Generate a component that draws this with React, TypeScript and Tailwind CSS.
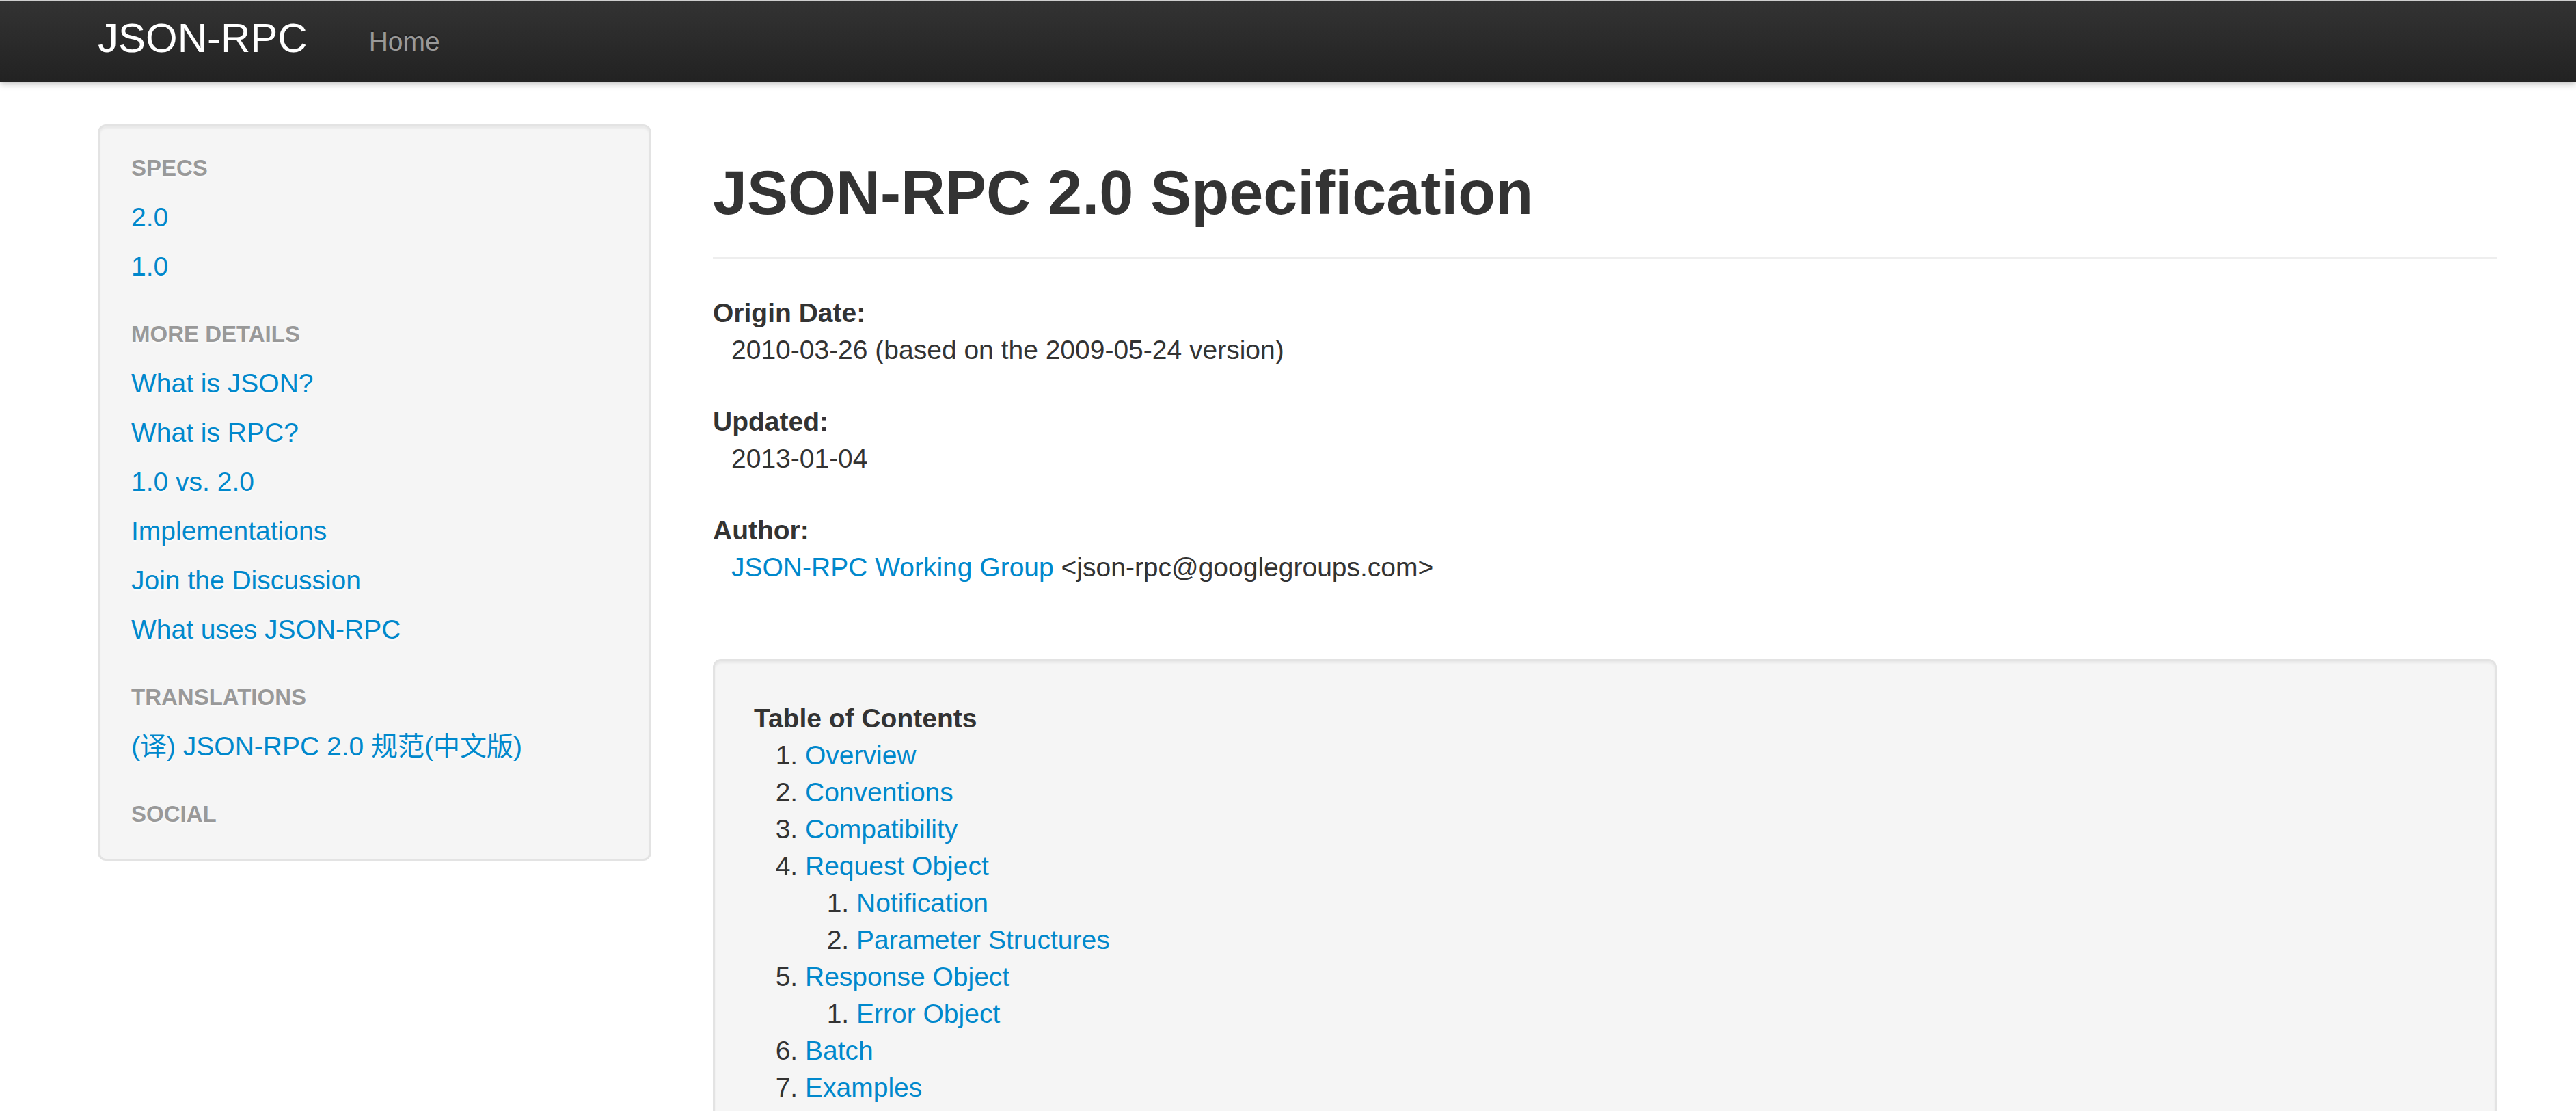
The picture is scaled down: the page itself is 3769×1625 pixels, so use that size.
import React from "react";

const sidebar: { header: string; links: string[] }[] = [
  { header: "Specs", links: ["2.0", "1.0"] },
  {
    header: "More Details",
    links: [
      "What is JSON?",
      "What is RPC?",
      "1.0 vs. 2.0",
      "Implementations",
      "Join the Discussion",
      "What uses JSON-RPC",
    ],
  },
  { header: "Translations", links: ["(译) JSON-RPC 2.0 规范(中文版)"] },
  { header: "Social", links: [] },
];

const toc: { title: string; children?: string[] }[] = [
  { title: "Overview" },
  { title: "Conventions" },
  { title: "Compatibility" },
  { title: "Request Object", children: ["Notification", "Parameter Structures"] },
  { title: "Response Object", children: ["Error Object"] },
  { title: "Batch" },
  { title: "Examples" },
];

const meta = [
  { label: "Origin Date:", value: "2010-03-26 (based on the 2009-05-24 version)" },
  { label: "Updated:", value: "2013-01-04" },
];

const App = () => {
  return (
    <div className="h-[1625px] overflow-hidden bg-white font-['Liberation_Sans','Noto_Sans_CJK_SC',sans-serif] text-[39px] leading-[54px] text-[#333333]">
      {/* top navbar */}
      <header className="h-[120px] border-t border-[#cfcfcf] bg-[linear-gradient(to_bottom,#333333,#222222)] shadow-[0_3px_9px_rgba(0,0,0,0.25)]">
        <div className="ml-[143px] flex">
          <a
            href="#"
            className="block pt-[25px] pr-[60px] text-[60px] leading-[60px] text-white"
          >
            JSON-RPC
          </a>
          <a
            href="#"
            className="block px-[30px] pt-[31px] text-[39px] leading-[57px] text-[#999999] [text-shadow:0_-3px_0_rgba(0,0,0,0.25)]"
          >
            Home
          </a>
        </div>
      </header>

      <div className="ml-[143px] flex pt-[62px]">
        {/* sidebar */}
        <aside className="w-[810px] shrink-0">
          <div className="rounded-[12px] border-[3px] border-[#e3e3e3] bg-[#f5f5f5] pt-[25px] pb-[29px] shadow-[inset_0_3px_3px_rgba(0,0,0,0.05)]">
            <ul>
              {sidebar.map((group, gi) => (
                <React.Fragment key={group.header}>
                  <li
                    className={
                      "px-[46px] py-[9px] text-[33px] font-bold uppercase text-[#999999] [text-shadow:0_3px_0_rgba(255,255,255,0.5)] " +
                      (gi > 0 ? "mt-[27px]" : "")
                    }
                  >
                    {group.header}
                  </li>
                  {group.links.map((l) => (
                    <li key={l}>
                      <a
                        href="#"
                        className="block px-[46px] py-[9px] text-[#0088cc] [text-shadow:0_3px_0_rgba(255,255,255,0.5)]"
                      >
                        {l}
                      </a>
                    </li>
                  ))}
                </React.Fragment>
              ))}
            </ul>
          </div>
        </aside>

        {/* main content */}
        <main className="ml-[90px] w-[2610px] shrink-0">
          <h1 className="mt-[46px] border-b-[3px] border-[#eeeeee] pb-[40px] text-[90px] font-bold leading-[108px]">
            JSON-RPC 2.0 Specification
          </h1>

          <dl className="mt-[52px]">
            {meta.map((m) => (
              <div key={m.label} className="mb-[51px]">
                <dt className="font-bold">{m.label}</dt>
                <dd className="ml-[27px]">{m.value}</dd>
              </div>
            ))}
            <div className="mb-[107px]">
              <dt className="font-bold">Author:</dt>
              <dd className="ml-[27px]">
                <a href="#" className="text-[#0088cc]">
                  JSON-RPC Working Group
                </a>{" "}
                &lt;json-rpc@googlegroups.com&gt;
              </dd>
            </div>
          </dl>

          <div className="rounded-[12px] border-[3px] border-[#e3e3e3] bg-[#f5f5f5] p-[57px] shadow-[inset_0_3px_3px_rgba(0,0,0,0.05)]">
            <p className="font-bold">Table of Contents</p>
            <ol className="ml-[75px] list-outside list-decimal">
              {toc.map((t) => (
                <li key={t.title}>
                  <a href="#" className="text-[#0088cc]">
                    {t.title}
                  </a>
                  {t.children && (
                    <ol className="ml-[75px] list-outside list-decimal">
                      {t.children.map((c) => (
                        <li key={c}>
                          <a href="#" className="text-[#0088cc]">
                            {c}
                          </a>
                        </li>
                      ))}
                    </ol>
                  )}
                </li>
              ))}
            </ol>
          </div>
        </main>
      </div>
    </div>
  );
};

export default App;
